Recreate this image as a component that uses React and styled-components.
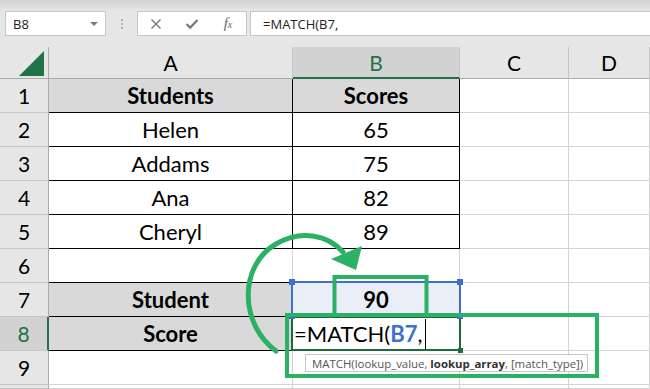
import React from 'react';
import styled, { createGlobalStyle, css } from 'styled-components';

const GREEN = '#217346';
const GRID = '#d4d4d4';
const HEAD_LINE = '#ababab';
const HEAD_SEP = '#c6c6c6';
const INK = '#000';
const MARK = '#2bb064';
const SEL = '#3e6fcf';

const Global = createGlobalStyle`
  html, body { margin: 0; padding: 0; background: #fff; overflow: hidden; }
  #root { width: 650px; height: 389px; }
`;

const Page = styled.div`
  position: relative;
  width: 650px;
  height: 389px;
  overflow: hidden;
  display: flex;
  flex-direction: column;
  font-family: Lato, "Open Sans", sans-serif;
`;

/* ---------- formula bar ---------- */
const Toolbar = styled.div`
  height: 47px;
  box-sizing: border-box;
  padding: 11px 0 0 5px;
  display: flex;
  align-items: flex-start;
  background: linear-gradient(#d2d2d2 0, #e6e6e6 11px);
  font-family: "Open Sans", sans-serif;
  font-size: 13px;
  color: #222;
`;

const NameBox = styled.div`
  width: 101px;
  height: 25px;
  box-sizing: border-box;
  background: #fff;
  border: 1px solid #c6c6c6;
  display: flex;
  align-items: center;
  justify-content: space-between;
  padding: 0 7px 0 7px;
`;

const Caret = styled.span`
  width: 0;
  height: 0;
  border-left: 4px solid transparent;
  border-right: 4px solid transparent;
  border-top: 4px solid #7a7a7a;
`;

const Grip = styled.div`
  width: 31px;
  height: 25px;
  box-sizing: border-box;
  padding-top: 8px;
  display: flex;
  flex-direction: column;
  align-items: center;
  gap: 2px;
  span {
    width: 2px;
    height: 2px;
    background: #b0b0b0;
  }
`;

const ButtonBox = styled.div`
  width: 110px;
  height: 25px;
  box-sizing: border-box;
  background: #fff;
  border: 1px solid #c6c6c6;
  display: grid;
  grid-template-columns: 36px 36px 36px;
  align-items: center;
  justify-items: center;
`;

const Fx = styled.span`
  font-family: "Liberation Serif", serif;
  font-style: italic;
  font-size: 15px;
  color: #666;
  sub {
    font-size: 10px;
    vertical-align: baseline;
  }
`;

const FormulaInput = styled.div`
  flex: 1;
  height: 25px;
  margin-left: 3px;
  box-sizing: border-box;
  background: #fff;
  border: 1px solid #c6c6c6;
  border-right: none;
  display: flex;
  align-items: center;
  padding-left: 12px;
`;

/* ---------- sheet ---------- */
const Sheet = styled.div`
  flex: 1;
  display: grid;
  grid-template-columns: 49px 244px 167px 109px 1fr;
  grid-template-rows: 32px repeat(9, 34px) 1fr;
  font-size: 21px;
  color: ${INK};
`;

const Corner = styled.div`
  background: #e6e6e6;
  border-right: 1px solid ${HEAD_LINE};
  border-bottom: 1px solid ${HEAD_LINE};
  display: flex;
  justify-content: flex-end;
  align-items: flex-end;
  padding: 0 4px 2px 0;
`;

const ColHead = styled.div`
  background: #e6e6e6;
  border-right: 1px solid ${HEAD_SEP};
  border-bottom: 1px solid ${HEAD_LINE};
  display: flex;
  align-items: center;
  justify-content: center;
  ${(p) =>
    p.$active &&
    css`
      background: #d2d2d2;
      color: ${GREEN};
      border-bottom: 2px solid ${GREEN};
    `}
`;

const RowHead = styled.div`
  background: #e6e6e6;
  border-right: 1px solid ${HEAD_LINE};
  border-bottom: 1px solid ${HEAD_SEP};
  display: flex;
  align-items: center;
  justify-content: center;
  ${(p) =>
    p.$active &&
    css`
      background: #d2d2d2;
      color: ${GREEN};
      border-right: 2px solid ${GREEN};
    `}
`;

const Cell = styled.div`
  position: relative;
  box-sizing: border-box;
  background: ${(p) => p.$fill || '#fff'};
  border-right: 1px solid ${(p) => p.$r || GRID};
  border-bottom: 1px solid ${(p) => p.$b || GRID};
  font-size: 22px;
  font-weight: ${(p) => (p.$bold ? 700 : 400)};
  display: flex;
  align-items: center;
  justify-content: ${(p) => (p.$left ? 'flex-start' : 'center')};
  padding-left: ${(p) => (p.$left ? '1px' : '0')};
  white-space: nowrap;
`;

const Selection = styled.div`
  position: absolute;
  left: -2px;
  top: -2px;
  right: -2px;
  bottom: -1px;
  border: 2px solid ${SEL};
  pointer-events: none;
  z-index: 2;
`;

const Handle = styled.i`
  position: absolute;
  width: 6px;
  height: 6px;
  background: ${(p) => p.$color || SEL};
  ${(p) => (p.$x === 'l' ? 'left: -4px;' : 'right: -4px;')}
  ${(p) => (p.$y === 't' ? 'top: -4px;' : 'bottom: -4px;')}
`;

const EditFrame = styled.div`
  position: absolute;
  left: -2px;
  top: -1px;
  right: -2px;
  bottom: -1px;
  border: 2px solid #1f6b40;
  pointer-events: none;
  z-index: 1;
`;

const Ref = styled.span`
  color: #3f6fd0;
  font-weight: 700;
`;

const Caret2 = styled.span`
  display: inline-block;
  width: 1px;
  height: 30px;
  margin-left: 3px;
  background: #000;
`;

const Tip = styled.div`
  position: absolute;
  left: 12px;
  top: 37px;
  height: 18px;
  box-sizing: border-box;
  padding: 0 4px 0 6px;
  background: #fff;
  border: 1px solid #c6c6c6;
  font-family: "Open Sans", sans-serif;
  font-size: 11.4px;
  color: #555;
  display: flex;
  align-items: center;
  z-index: 3;
  b {
    font-weight: 700;
    color: #333;
  }
`;

const Marks = styled.svg`
  position: absolute;
  left: 0;
  top: 0;
  width: 650px;
  height: 389px;
  pointer-events: none;
  z-index: 5;
`;

const B = '#000';

const rows = [
  { a: 'Students', b: 'Scores', bold: true, fill: '#d9d9d9' },
  { a: 'Helen', b: '65' },
  { a: 'Addams', b: '75' },
  { a: 'Ana', b: '82' },
  { a: 'Cheryl', b: '89' },
];

function CloseIcon() {
  return (
    <svg width="12" height="12" viewBox="0 0 12 12">
      <path d="M1.5 1.5 L10.5 10.5 M10.5 1.5 L1.5 10.5" stroke="#777" strokeWidth="1.4" fill="none" />
    </svg>
  );
}

function CheckIcon() {
  return (
    <svg width="14" height="12" viewBox="0 0 14 12">
      <path d="M1.5 6 L5.2 9.6 L12.5 2" stroke="#777" strokeWidth="2.2" fill="none" />
    </svg>
  );
}

export default function App() {
  return (
    <Page>
      <Global />
      <Toolbar>
        <NameBox>
          <span>B8</span>
          <Caret />
        </NameBox>
        <Grip>
          <span />
          <span />
          <span />
        </Grip>
        <ButtonBox>
          <CloseIcon />
          <CheckIcon />
          <Fx>
            f<sub>x</sub>
          </Fx>
        </ButtonBox>
        <FormulaInput>=MATCH(B7,</FormulaInput>
      </Toolbar>

      <Sheet>
        <Corner>
          <svg width="25" height="25" viewBox="0 0 25 25">
            <polygon points="25,0 25,25 0,25" fill={GREEN} />
          </svg>
        </Corner>
        <ColHead>A</ColHead>
        <ColHead $active>B</ColHead>
        <ColHead>C</ColHead>
        <ColHead>D</ColHead>

        {rows.map((r, i) => (
          <React.Fragment key={i}>
            <RowHead>{i + 1}</RowHead>
            <Cell $bold={r.bold} $fill={r.fill} $r={B} $b={B}>
              {r.a}
            </Cell>
            <Cell $bold={r.bold} $fill={r.fill} $r={B} $b={B}>
              {r.b}
            </Cell>
            <Cell />
            <Cell />
          </React.Fragment>
        ))}

        <RowHead>6</RowHead>
        <Cell $b={B} />
        <Cell />
        <Cell />
        <Cell />

        <RowHead>7</RowHead>
        <Cell $bold $fill="#d9d9d9" $r={B} $b={B}>
          Student
        </Cell>
        <Cell $bold $fill="#e9eef8" $r={B} $b={B}>
          90
          <Selection>
            <Handle $x="l" $y="t" />
            <Handle $x="r" $y="t" />
            <Handle $x="l" $y="b" />
            <Handle $x="r" $y="b" />
          </Selection>
        </Cell>
        <Cell />
        <Cell />

        <RowHead $active>8</RowHead>
        <Cell $bold $fill="#d9d9d9" $b={B}>
          Score
        </Cell>
        <Cell $left>
          =MATCH(<Ref>B7</Ref>,<Caret2 />
          <EditFrame>
            <Handle $x="r" $y="b" $color="#1f6b40" style={{ width: 5, height: 5 }} />
          </EditFrame>
          <Tip>
            MATCH(lookup_value,&nbsp;<b>lookup_array</b>, [match_type])
          </Tip>
        </Cell>
        <Cell />
        <Cell />

        <RowHead>9</RowHead>
        <Cell />
        <Cell />
        <Cell />
        <Cell />

        <RowHead />
        <Cell />
        <Cell />
        <Cell />
        <Cell />
      </Sheet>

      <Marks viewBox="0 0 650 389">
        <path
          d="M276 351 C 240 325, 238 266, 276 244 C 300 230, 327 234, 343 252"
          stroke={MARK}
          strokeWidth="5"
          strokeLinecap="round"
          fill="none"
        />
        <polygon points="331,259 362,246 356,270" fill={MARK} />
        <path d="M334.5 314 V277 H426.5 V314" stroke={MARK} strokeWidth="4" fill="none" />
        <rect x="287" y="315" width="310" height="61" stroke={MARK} strokeWidth="4" fill="none" />
      </Marks>
    </Page>
  );
}
